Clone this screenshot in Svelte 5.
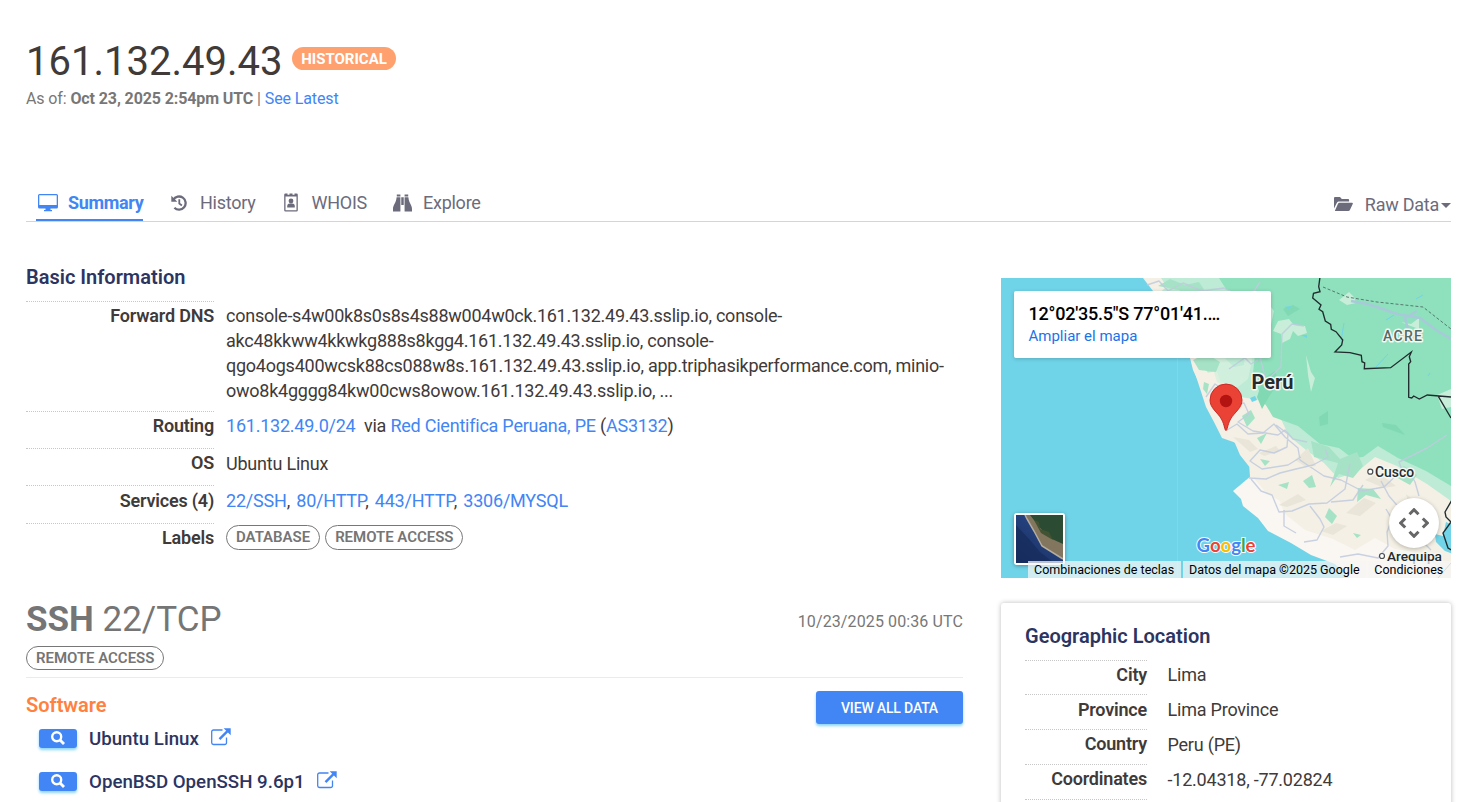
<script>
  const tabs = [
    { name: 'Summary', icon: 'desktop', active: true },
    { name: 'History', icon: 'history' },
    { name: 'WHOIS', icon: 'badge' },
    { name: 'Explore', icon: 'binoculars' }
  ];
  const services = ['22/SSH', '80/HTTP', '443/HTTP', '3306/MYSQL'];
  const software = ['Ubuntu Linux', 'OpenBSD OpenSSH 9.6p1'];
  const geo = [
    ['City', 'Lima', 34],
    ['Province', 'Lima Province', 35],
    ['Country', 'Peru (PE)', 35],
    ['Coordinates', '-12.04318, -77.02824', 35]
  ];
</script>

{#snippet icon(name)}
  {#if name === 'desktop'}
    <svg class="ic desktop" viewBox="0 0 20 18"><path fill="currentColor" fill-rule="evenodd" d="M1.5 0h17A1.5 1.5 0 0 1 20 1.500V13a1.500 1.500 0 0 1-1.500 1.500H12.500V16H14v1.300H6V16h1.500v-1.500h-6A1.500 1.500 0 0 1 0 13V1.500A1.500 1.500 0 0 1 1.500 0zM1.300 1.200v9.800h17.400V1.200z" /></svg>
  {:else if name === 'history'}
    <svg class="ic history" viewBox="0 0 16 16"><path d="M2.300 4.800A6.600 6.600 0 1 1 3.400 12.800" fill="none" stroke="currentColor" stroke-width="2.300" /><path d="M.3.800v6h6z" fill="currentColor" /><path d="M8.300 4.200v4.300l2.600 1.900" fill="none" stroke="currentColor" stroke-width="1.800" /></svg>
  {:else if name === 'badge'}
    <svg class="ic badge-ic" viewBox="0 0 14 19"><path fill="currentColor" fill-rule="evenodd" d="M1.500.500h11A1.300 1.300 0 0 1 13.800 1.800v15.400a1.300 1.300 0 0 1-1.300 1.300h-11A1.300 1.300 0 0 1 .2 17.200V1.800A1.300 1.300 0 0 1 1.500.500zM1.500 3.500v13.700h11V3.500zM3.500.4v1.300h2V.4zM8.500.4v1.300h2V.4z" /><circle cx="7" cy="8" r="2.400" fill="currentColor" /><path d="M3.200 14.500v-1.400c0-1.700 1.200-2.500 2.700-2.500h2.200c1.500 0 2.700.8 2.700 2.500v1.400z" fill="currentColor" /></svg>
  {:else if name === 'binoculars'}
    <svg class="ic bino" viewBox="0 0 20 18"><path fill="currentColor" d="M4 0h3.800v2.200H4zM12.200 0H16v2.200h-3.800zM3.800 3h4v15H0v-2.500C0 11 3.300 9 3.800 3zM16.200 3h-4v15H20v-2.500C20 11 16.700 9 16.200 3zM8.700 3h2.600v8H8.700z" /></svg>
  {:else if name === 'folder'}
    <svg class="ic folder" viewBox="0 0 19 14"><path fill="currentColor" d="M0 11.500V1.400C0 .5.500 0 1.400 0H6l1.800 1.900h6c.9 0 1.300.5 1.300 1.300v1.200H5.200c-1 0-1.800.5-2.300 1.400zM1 13.500 4 6.700c.3-.7.800-1 1.600-1H18c.8 0 1.100.6.700 1.300l-2.800 6c-.3.700-.8 1-1.600 1H1.300c-.4 0-.5-.2-.3-.5z" /></svg>
  {:else if name === 'search'}
    <svg class="search" viewBox="0 0 14 14"><circle cx="5.700" cy="5.700" r="4.500" fill="none" stroke="currentColor" stroke-width="2.400" /><path d="m9 9 4 4" stroke="currentColor" stroke-width="2.800" /></svg>
  {:else}
    <svg class="ext" viewBox="0 0 20 18"><path d="M11.500 2H2.500A1.800 1.800 0 0 0 .7 3.800v10.900a1.800 1.800 0 0 0 1.800 1.800h11.200a1.800 1.800 0 0 0 1.800-1.800V9.500" fill="none" stroke="currentColor" stroke-width="1.300" /><path d="m8.500 11.200 8-8" stroke="currentColor" stroke-width="2.500" /><path d="M12.700.3h7v7z" fill="currentColor" /></svg>
  {/if}
{/snippet}

<div class="page">
  <header>
    <div class="title"><h1>161.132.49.43</h1><span class="hist">HISTORICAL</span></div>
    <p class="asof">As of: <b>Oct 23, 2025 2:54pm UTC</b> | <a href="#latest">See Latest</a></p>
  </header>

  <nav>
    {#each tabs as t}
      <a href="#{t.name}" class="tab {t.icon}-tab" class:active={t.active}><i>{@render icon(t.icon)}</i><span>{t.name}</span></a>
    {/each}
    <a href="#raw" class="raw">{@render icon('folder')}<span>Raw Data</span><em></em></a>
  </nav>

  <div class="columns">
    <main>
      <h2>Basic Information</h2>
      <dl class="basic">
        <dt>Forward DNS</dt>
        <dd class="dense">console-s4w00k8s0s8s4s88w004w0ck.161.132.49.43.sslip.io, console-<br />akc48kkww4kkwkg888s8kgg4.161.132.49.43.sslip.io, console-<br />qgo4ogs400wcsk88cs088w8s.161.132.49.43.sslip.io, app.triphasikperformance.com, minio-<br />owo8k4gggg84kw00cws8owow.161.132.49.43.sslip.io, ...</dd>
        <dt>Routing</dt>
        <dd class="dense routing"><a href="#net">161.132.49.0/24</a>&nbsp; via <a href="#as">Red Cientifica Peruana, PE</a> (<a href="#asn">AS3132</a>)</dd>
        <dt>OS</dt>
        <dd class="low">Ubuntu Linux</dd>
        <dt class="low">Services (4)</dt>
        <dd class="services">{#each services as s, i}<span><a href="#{s}">{s}</a>{i < services.length - 1 ? ',' : ''}</span>{/each}</dd>
        <dt>Labels</dt>
        <dd class="pills"><span class="pill">DATABASE</span><span class="pill">REMOTE ACCESS</span></dd>
      </dl>

      <section class="service">
        <div class="service-head"><h3><b>SSH</b> 22/TCP</h3><time>10/23/2025 00:36 UTC</time></div>
        <div class="service-labels"><span class="pill">REMOTE ACCESS</span></div>
        <div class="software">
          <div>
            <h4>Software</h4>
            {#each software as s}
              <div class="sw"><button aria-label="Search">{@render icon('search')}</button><span>{s}</span><a href="#{s}" aria-label="Open">{@render icon('ext')}</a></div>
            {/each}
          </div>
          <button class="view">VIEW ALL DATA</button>
        </div>
      </section>
    </main>

    <aside>
      <div class="map">
        <svg class="terrain" viewBox="0 0 450 300">
          <defs>
            <linearGradient id="sat" x1="0" y1="1" x2=".8" y2="0"><stop offset="0" stop-color="#182c5b" /><stop offset="1" stop-color="#2b4d91" /></linearGradient>
          </defs>
          <rect width="450" height="300" fill="#70d4e9" />
          <path d="M176.500 67V300" stroke="#82d9eb" stroke-width=".8" />
          <path fill="#f4f0e5" d="M142 0l10 13 18 25 13 25 6 17 3 12 7 15 9 18 6 12 11.700 16 8.300 12.300 5 11.700 9.300 11.700.7 10-5 4.300 3.300 7.300 8.400 8.400 1.600 6.600 15 11.700 10 13.300 23.400 11.700 20 11.700 23.300 9.300L366 300h84V0z" />
          <path fill="#faf7f2" d="M244 203l8-4 14 17 12 6 6 14 20 16 28 9 22 11 20-12 20 11 18 3 23 13v16h-84l-17-17-24-9-20-12-23-12-10-13-15-12-2-7-8-8z" />
          <path fill="#bdebd5" d="M155 0h295v223l-24-17-30-18-22-9-18 15-19 6-14-15-18-13-17-14-10-21-20-15-24-4-26-22-13-16-16-33z" />
          <path fill="#8fe0bd" d="M218 0h232v208l-25-15-28-13-20-12-15 11-11 1-13-10-19-4-22-18-25-9-12-20-8-24 2-19 12-12 7-31-9-12-19-1-20-9z" />
          <path fill="#f4f0e5" d="M193 92l8-6 4 9 11-2 3 10 10 5 7 12 16 3 6 10 14 9 6 14-18 2-22 8-17-6-8-16-8-15zM146 0h14l6 9-6 4-6-2z" />
          <path fill="#d6f0df" d="M277 43l11-2 5 6 11 1 2 7-9 3-5-5-3 8-8 4-1-9-8-3zM305 77l5 17 4 6-4 14-3-17zM338 22l10-8 5 5 2 6-9 2zM400 44l10 2 8-6v11l-11-4zM208 78l16 2 9 9 10-2 2-20 4 0 2 16-4 18-14 11-17-8zM436 117l14-6v18l-9 2z" opacity=".8" />
          <path fill="#80d9b2" d="M318 139l9-6v13l-8 2zM381 145l14 2 9 10-22-8zM282 31l10-4 7 4-12 7zM262 101l12-8 4 12-9 12-8 14-5-12z" />
          <g fill="#a6e3c6">
            <path d="M157 8l12-7 15 6 14-3 8 12-18 3-10-7zM192 82l14-6 13 8-4 10-17-2zM256 160l10-5-6 11zM259 181l10 2-5 5zM277 207l11-3-2 7zM310 163l18 6 11 12 17-7 6 14-10 12-14-4-9 13 8-24-24-6zM328 230l8 8-5 8-7-7zM352 255l8 2-4 3zM357 210l15 1 8 10-15-4-9 7zM390 196l13-8 13 9-7 10-9-5zM389 275l9 1-1 9-8-4zM302 203l9-6 4 12-7 1zM203 104l5 2-2 10-4-5zM241 138l9-6 4 8-8 9z" />
          </g>
          <path fill="#e9e5d8" d="M232 159l16 3 9 9-8 3zM294 182l13-12 8 18-10 1zM278 227l19-11 8 6-19 7zM345 235l18-15 12 5-16 13zM364 202l14-7 17 13-12 2zM320 253l15-8 11 3-14 9zM258 175l17-7 4 5-16 5zM405 216l15 12-11 3zM222 108l9 6 4 10-8-2z" />
          <g fill="none" stroke="#c0cade" stroke-width="1.400" stroke-linejoin="round">
            <path d="M146 7l12-4 9 10 15-8 19 8 22-3 15 8 15-5 6-9M192 77l10-8 11 10 11-13 14 8 12 12 7-4M228 91l17-12 14 0 6 24 15-14 1-33 10-10 12 2M205 119l9-13 8 5-3 10 12 7 12-3 5 11-11 8 15 9 25 4 7-5 8 9 14 3" opacity=".85" />
            <path d="M226 152l10-6 11 10 15-1 11-9 11 13 13 11 2 12 24 16 17 4 21 11 22-4 18-17-3-8 28-14 20-13M275 147l12 9-1 13-13 6-14-3-10 11 12 8 26-4 13-8M248 200l17 1 14-6 16-4 17-4 15-8-3-8M250 201l10 12 11 4 7 17 13-1 17-7 18-1 18-14 5-26M283 232v16l12 7M309 228l10 13 4 8-7 13-13 2M330 224l22-2 10-15M380 203l8 15 13 15M385 231l6 10-5 13 1 14-10 12-20-4-18 3M391 253l17 11 11-3 11 11M406 190l8 14 4 14" opacity=".85" />
            <path d="M350 23l16 3 10 3 20 7 23 4 16 12 15 9M407 51l-3-11 12-7" stroke="#a8c9d9" stroke-width="2.500" />
          </g>
          <g stroke="#71d4e9" fill="#71d4e9" stroke-width="1"><path d="M343 45l-3 18M375 89l12-13M415 21l7-4M385 42l8-5M427 98l2-3" fill="none" /><path d="M283 29l7-1-2 3zM300 57h6v3zM249 120l5-2 2 4-5 2z" stroke="none" /><path d="M434 256l8 2 3-14 7 3v29l-8-3-9-9z" stroke="none" /></g>
          <path d="M322 9l24 10 30 5 46 5 28 22" fill="none" stroke="#56796e" stroke-width="1" stroke-dasharray="3 2" />
          <path d="M319-1l-1.300 9.700 1.300 5-6.500 1.600-.8 4.700 8.300 7-2 4.300 3.700 2.400 2.600 9.300 5.400 3.300.6 5 4.700 2.400 6.700 8.300-1 5-6.700 7 15 .7 11.300 2.600.7 6.400 2.700 1.300-.4 5.700 26.400-1L410.300 74l-2 4.700 1.400 5-2 2.300v33.300l3 .7 2-2 5.600 3 8-4 23.700 2M437.300 118.300L450 140M451 222l-7 12 1 5 5 5-8 11 2 6 3 9 5 3" fill="none" stroke="#202c2d" stroke-width="1.350" />
          <path d="M437 300l13-15" stroke="#8b9090" />
          <g class="label" font-weight="500"><text x="250.500" y="110.500" font-size="20" font-weight="700" textLength="42" lengthAdjust="spacingAndGlyphs">Perú</text><text x="382" y="62.500" font-size="14" textLength="39">ACRE</text><text x="374" y="199" font-size="14" textLength="39" lengthAdjust="spacingAndGlyphs">Cusco</text><text x="386" y="283" font-size="13.500" textLength="55" lengthAdjust="spacingAndGlyphs">Arequipa</text></g>
          <g fill="#fff" stroke="#464b4e" stroke-width="1.200"><circle cx="369.300" cy="193.700" r="2.500" /><circle cx="381" cy="278" r="2.500" /></g>
          <text class="google" x="195.500" y="274" textLength="59" lengthAdjust="spacingAndGlyphs"><tspan fill="#4285f4">G</tspan><tspan fill="#ea4335">o</tspan><tspan fill="#fbbc04">o</tspan><tspan fill="#4285f4">g</tspan><tspan fill="#34a853">l</tspan><tspan fill="#ea4335">e</tspan></text>
          <path d="M225 152.500c-1.400 0-1.300-5.500-4.600-11.500-4.100-7.200-11.400-10.700-11.400-19a16 16 0 0 1 32 0c0 8.300-7.300 11.800-11.400 19-3.300 6-3.200 11.500-4.600 11.500z" fill="#ea4335" stroke="#c5221f" stroke-width=".9" /><circle cx="225" cy="123" r="6.200" fill="#b31412" />
        </svg>
        <div class="place"><strong>12°02'35.5"S 77°01'41.…</strong><a href="#map">Ampliar el mapa</a></div>
        <div class="thumb"><svg viewBox="0 0 47 48"><rect width="47" height="48" fill="url(#sat)" /><path d="M0 48V10l14 15 10 12 14 11z" fill="#172c5d" opacity=".75" /><path d="M9 0l8 14 9 17 21 13V0z" fill="#83765e" /><path d="M14 0l10 13 12 11 11 5V0z" fill="#2b4b32" /><path d="M18 5l5 2 1 7 9 3 4 8-12-7z" fill="#425333" /><path d="M9 0l2 4 7 12 8 15 21 13" fill="none" stroke="#b4ada0" stroke-width="1.500" /></svg></div>
        <div class="pan"><svg viewBox="0 0 30 30"><path d="M10.500 6.200 15 1.700l4.500 4.500M10.500 23.800l4.500 4.500 4.500-4.500M6.200 10.500 1.700 15l4.500 4.500M23.800 10.500l4.500 4.500-4.500 4.500" fill="none" stroke="#666" stroke-width="3" /></svg></div>
        <div class="credits"><span>Combinaciones de teclas</span><span>Datos del mapa ©2025 Google</span><span>Condiciones</span></div>
      </div>

      <section class="card">
        <h2>Geographic Location</h2>
        <dl>
          {#each geo as [k, v, h], i}
            <div class="georow" style="height: {h}px"><dt class:low={i === 1}>{k}</dt><dd class:low={i > 0}>{v}</dd></div>
          {/each}
        </dl>
        <div class="rule"></div>
      </section>
    </aside>
  </div>
</div>

<style>
  :global(body) { margin: 0; background: #fff; overflow: hidden; }
  .page { box-sizing: border-box; width: 1473px; height: 802px; overflow: hidden; padding: 0 22px 0 26px; font: 18px/25px Roboto, sans-serif; color: #403a39; }
  h1, h2, h3, h4, p, dl, dt, dd { margin: 0; }
  a { color: #4285f4; text-decoration: none; }
  button { border: 0; padding: 0; background: #4285f4; color: #fff; border-radius: 3px; box-shadow: 0 2px 3px #8bd5fb; font-family: inherit; }
  svg { display: block; }
  header { height: 182px; padding-top: 36px; box-sizing: border-box; }
  .title { display: flex; height: 48px; gap: 10px; }
  h1 { font-size: 40px; line-height: 51px; font-weight: 400; width: 256px; white-space: nowrap; }
  .hist { box-sizing: border-box; width: 104px; height: 23px; margin-top: 11px; border-radius: 12px; background: #ffa06f; color: #fff; font-size: 15px; line-height: 24px; font-weight: 700; text-align: center; }
  .asof { font-size: 16px; line-height: 24px; margin-top: 3px; color: #777; white-space: nowrap; letter-spacing: -.11px; }
  nav { display: flex; height: 39px; border-bottom: 1px solid #d5d5d8; padding-left: 10px; letter-spacing: -.25px; }
  .tab { display: flex; height: 37px; margin-right: 27px; line-height: 41px; color: #6c6b7c; }
  .tab i { width: 32px; flex: none; padding-top: 12px; box-sizing: border-box; }
  .active { color: #4285f4; font-weight: 700; border-bottom: 2px solid #4285f4; letter-spacing: -.34px; }
  .desktop { width: 20px; height: 18px; margin-left: 2px; }
  .history-tab { margin-right: 28px; }
  .history-tab i { width: 29.500px; padding-top: 13px; }
  .history { width: 16px; height: 16px; margin-left: 1px; }
  .badge-tab i { width: 28px; padding-top: 11px; }
  .badge-tab { margin-right: 26px; }
  .badge-ic { width: 14px; height: 19px; margin-left: .500px; }
  .binoculars-tab i { width: 30px; padding-top: 12px; }
  .bino { width: 19px; height: 18px; }
  .raw { display: flex; align-items: center; margin-left: auto; height: 45px; color: #6c6b7c; }
  .folder { width: 19px; height: 14px; margin-right: 11.500px; margin-top: -1px; }
  .raw em { border: 5px solid transparent; border-top-color: currentColor; border-bottom: 0; margin: 2px 0 0 2px; }
  .columns { display: grid; grid-template-columns: 938px 450px; gap: 37px; }
  main { padding-top: 43px; }
  h2 { font-size: 20px; line-height: 25px; font-weight: 600; color: #2c3561; }
  .basic { display: grid; grid-template-columns: 188px 1fr; column-gap: 12px; grid-template-rows: 110px 37px 37px 38px 66px; margin-top: 11px; }
  dt { border-top: 1px dotted #c7c7c7; text-align: right; font-weight: 600; padding-top: 1px; letter-spacing: -.2px; }
  dd { padding-top: 2px; white-space: nowrap; letter-spacing: -.21px; }
  dd.dense { letter-spacing: -.247px; }
  dd.routing { letter-spacing: -.23px; }
  dt.low { padding-top: 2px; }
  dd.low { padding-top: 3px; }
  .services { display: flex; gap: 6.300px; padding-top: 3px; }
  .pills { display: flex; gap: 5px; }
  .pill { box-sizing: border-box; display: inline-block; height: 25px; border: 1px solid #777; border-radius: 13px; padding: 0 9px; font-size: 15px; line-height: 22px; font-weight: 600; letter-spacing: -.03px; color: #757575; white-space: nowrap; }
  .service { margin-right: 1px; }
  .service-head { display: flex; justify-content: space-between; height: 57px; }
  h3 { font-size: 35px; line-height: 62px; font-weight: 400; color: #757575; }
  time { font-size: 16px; line-height: 66px; letter-spacing: .11px; color: #777; }
  .service-labels { height: 31px; border-bottom: 1px solid #ebebeb; }
  .service-labels .pill { display: block; width: 138px; height: 24px; }
  .software { display: flex; justify-content: space-between; padding-top: 13px; }
  h4 { font-size: 20px; line-height: 28px; font-weight: 600; color: #ff8142; }
  .sw { display: flex; align-items: center; height: 42px; margin-left: 13px; font-size: 18.700px; font-weight: 500; color: #2c3561; }
  .sw button { width: 38px; height: 19px; margin-right: 12px; display: flex; justify-content: center; align-items: center; }
  .sw span { position: relative; top: 1px; }
  .search { width: 14px; height: 14px; }
  .sw:nth-of-type(1) { margin-top: -2px; }
  .sw a { margin: -3px 0 0 12px; }
  .ext { width: 20px; height: 18px; }
  .sw + .sw { padding-top: 1px; }
  .view { width: 147px; height: 33px; font-size: 14px; font-weight: 500; letter-spacing: -.17px; }
  aside { padding-top: 56px; }
  .map { position: relative; width: 450px; height: 300px; overflow: hidden; }
  .terrain { width: 450px; height: 300px; }
  .label text { paint-order: stroke; stroke: #f4f8f3; stroke-width: 3px; stroke-linejoin: round; fill: #272b2d; }
  .label text:nth-child(2) { fill: #536b64; }
  .google { font: 700 19.500px Lato, sans-serif; paint-order: stroke; stroke: #fff; stroke-width: 2px; }
  .place { position: absolute; left: 13px; top: 13px; box-sizing: border-box; width: 257px; height: 67px; padding: 12px 14.500px; background: #fff; border-radius: 2px; box-shadow: 0 1px 4px #0003; color: #000; }
  .place strong { display: block; font-size: 18px; line-height: 22px; font-weight: 500; letter-spacing: -.22px; white-space: nowrap; }
  .place a { display: block; font-size: 15px; line-height: 22px; color: #1a73e8; }
  .thumb { position: absolute; left: 13px; top: 235px; width: 47px; height: 48px; border: 2px solid #fff; border-radius: 3px; box-shadow: 0 1px 4px #0005; }
  .pan { position: absolute; left: 388px; top: 220px; width: 50px; height: 50px; border-radius: 50%; background: #fff; box-shadow: 0 1px 4px #0004; display: grid; place-items: center; }
  .pan svg { width: 30px; height: 30px; }
  .credits { position: absolute; left: 27px; right: 0; bottom: 0; height: 17px; display: flex; gap: 2px; font-size: 12.500px; line-height: 17px; color: #000; white-space: nowrap; }
  .credits span { background: #f5f5f5bb; padding: 0 6.800px 0 6px; }
  .credits span:last-child { flex: 1; }
  .card { box-sizing: border-box; margin-top: 25px; height: 240px; padding: 21px 24px; border-radius: 3px; box-shadow: 0 0 5px #0004; }
  .card dl { margin-top: 11px; }
  .georow { display: grid; grid-template-columns: 122px 1fr; column-gap: 20.500px; }
  .rule { width: 122px; border-top: 1px dotted #c7c7c7; }
</style>
